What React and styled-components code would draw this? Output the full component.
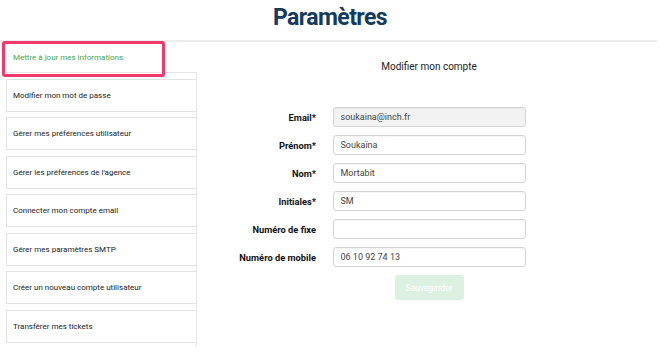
import React from "react"
import styled, { createGlobalStyle } from "styled-components"

const GlobalStyle = createGlobalStyle`
  html, body {
    margin: 0;
    padding: 0;
    background: #ffffff;
  }
  body {
    font-family: Roboto, "Liberation Sans", Arial, sans-serif;
    color: #333;
  }
`

const Page = styled.div`
  width: 661px;
`

const Header = styled.header`
  margin-right: 4px;
  padding: 4px 0 8px;
  border-bottom: 2px solid #ececec;
  text-align: center;
`

const Title = styled.h1`
  margin: 0;
  padding-left: 3px;
  font-size: 23px;
  font-weight: 700;
  letter-spacing: -0.6px;
  color: #143a5e;
  line-height: 28px;
`

const Body = styled.div`
  display: flex;
  align-items: flex-start;
`

const Sidebar = styled.nav`
  position: relative;
  width: 191px;
  margin-left: 6px;
`

const ActiveItem = styled.div`
  display: flex;
  align-items: center;
  height: 30px;
  padding-left: 7px;
  font-size: 8px;
  color: #3fa556;
`

const Highlight = styled.div`
  position: absolute;
  left: -4px;
  top: -1px;
  width: 157px;
  height: 30px;
  border: 3px solid #f2386d;
  border-radius: 3px;
  pointer-events: none;
`

const List = styled.div`
  display: flex;
  flex-direction: column;
  gap: 5.5px;
  padding-top: 5.5px;
  border-top: 1px solid #e6e6e6;
  border-right: 1px solid #e6e6e6;
  padding-bottom: 4px;
`

const Item = styled.div`
  display: flex;
  align-items: center;
  height: 33px;
  box-sizing: border-box;
  padding-left: 6px;
  border: 1px solid #e2e2e2;
  border-right: none;
  font-size: 8px;
  color: #222;
`

const Panel = styled.main`
  flex: 1;
  padding-top: 19px;
  display: flex;
  flex-direction: column;
  align-items: center;
`

const Subtitle = styled.h2`
  margin: 0 0 34px;
  font-size: 10px;
  font-weight: 400;
  color: #1c1c1c;
  line-height: 12px;
`

const Form = styled.form`
  width: 100%;
  display: grid;
  grid-template-columns: 1fr 193px 1fr;
  row-gap: 8px;
`

const Label = styled.label`
  grid-column: 1;
  align-self: center;
  justify-self: end;
  padding-right: 16.5px;
  font-size: 9.3px;
  font-weight: 700;
  color: #111;
`

const Input = styled.input`
  grid-column: 2;
  box-sizing: border-box;
  width: 100%;
  height: 20px;
  padding: 0 7px;
  border: 1px solid #d4d4d4;
  border-radius: 3px;
  background: ${p => (p.disabled ? "#f2f2f2" : "#ffffff")};
  font-family: Roboto, "Liberation Sans", Arial, sans-serif;
  font-size: 9px;
  color: #444;
  box-shadow: inset 0 1px 1px rgba(0, 0, 0, 0.04);
  outline: none;
`

const SaveButton = styled.button`
  grid-column: 2;
  justify-self: center;
  width: 69px;
  height: 25px;
  border: none;
  border-radius: 3px;
  background: #dcf1e2;
  color: #ffffff;
  font-family: Roboto, "Liberation Sans", Arial, sans-serif;
  font-size: 8.5px;
`

const menu = [
  "Modifier mon mot de passe",
  "Gérer mes préférences utilisateur",
  "Gérer les préférences de l'agence",
  "Connecter mon compte email",
  "Gérer mes paramètres SMTP",
  "Créer un nouveau compte utilisateur",
  "Transférer mes tickets",
]

const fields = [
  { id: "email", label: "Email*", value: "soukaina@inch.fr", disabled: true },
  { id: "prenom", label: "Prénom*", value: "Soukaïna" },
  { id: "nom", label: "Nom*", value: "Mortabit" },
  { id: "initiales", label: "Initiales*", value: "SM" },
  { id: "fixe", label: "Numéro de fixe", value: "" },
  { id: "mobile", label: "Numéro de mobile", value: "06 10 92 74 13" },
]

export default function App() {
  return (
    <Page>
      <GlobalStyle />
      <Header>
        <Title>Paramètres</Title>
      </Header>
      <Body>
        <Sidebar>
          <ActiveItem>Mettre à jour mes informations</ActiveItem>
          <Highlight />
          <List>
            {menu.map(m => (
              <Item key={m}>{m}</Item>
            ))}
          </List>
        </Sidebar>
        <Panel>
          <Subtitle>Modifier mon compte</Subtitle>
          <Form onSubmit={e => e.preventDefault()}>
            {fields.map(f => (
              <React.Fragment key={f.id}>
                <Label htmlFor={f.id}>{f.label}</Label>
                <Input id={f.id} defaultValue={f.value} disabled={f.disabled} />
              </React.Fragment>
            ))}
            <SaveButton type="submit">Sauvegarder</SaveButton>
          </Form>
        </Panel>
      </Body>
    </Page>
  )
}
